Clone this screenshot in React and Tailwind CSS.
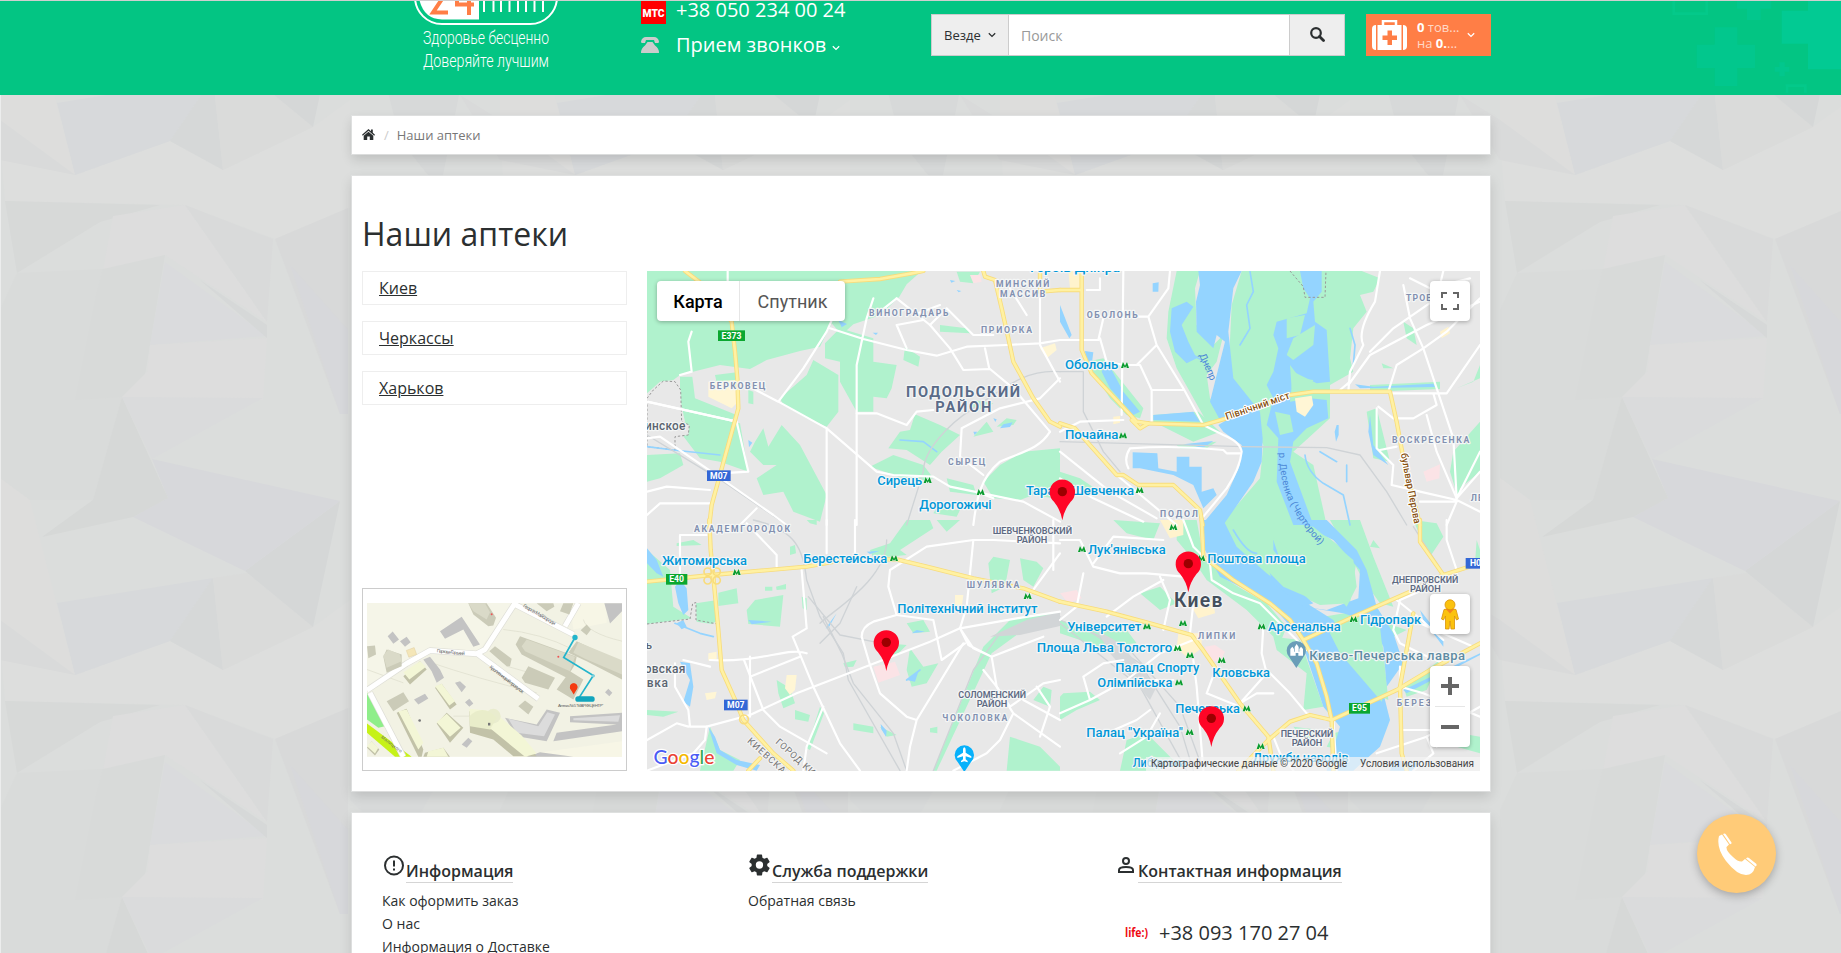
import React from "react";

/* ---------- page backdrop ---------- */
const FACETS = [
  ["#d9dbda", "17,273 103,269 143,358 145,375 122,397 93,500 30,500 0,478 0,310"],
  ["#dddedd", "0,640 75,675 170,641 223,670 313,627 350,600 350,708 275,739 185,705 5,701"],
  ["#d7d9db", "57,603 213,578 170,641 75,675"],
  ["#d6d8d8", "213,578 223,670 170,641"],
  ["#dadbda", "213,578 247,573 313,627 223,670"],
  ["#d5d7d7", "340,501 313,627 245,571"],
  ["#d7d8db", "152,459 340,501 245,571 133,517 168,498"],
  ["#d6d8d7", "122,397 168,498 133,517 42,537 93,500"],
  ["#dddddc", "0,478 30,500 75,675 0,620"],
  ["#d9dada", "-40,595 0,620 75,675 0,660"],
  ["#d7d9d8", "5,201 160,205 100,222 17,273"],
  ["#dddddd", "113,216 185,205 267,322 165,255 103,270"],
  ["#d9dada", "185,205 273,239 267,322"],
  ["#d8dad9", "103,269 165,255 145,375 122,397 75,400 95,300"],
  ["#dadbdd", "165,262 267,336 150,345"],
  ["#d6d8d8", "200,280 267,325 267,338"],
  ["#dddddd", "122,397 147,372 150,345 267,338 263,400"],
  ["#d8d9d9", "275,239 348,208 348,414 340,414"],
  ["#d7d8db", "290,265 348,330 348,414 340,414"],
  ["#dadbdc", "122,397 263,398 152,459"],
  ["#d9dbdb", "360,210 450,260 400,350 350,300"],
  ["#d7d9d9", "380,560 470,540 440,690 400,640"],
  ["#dcdddd", "400,400 490,470 470,540 360,500"],
];

function Backdrop() {
  const tiles = [];
  for (let i = -1; i < 4; i++) for (let j = -1; j < 2; j++) tiles.push([i * 500, j * 500]);
  return (
    <svg className="absolute inset-0 h-full w-full" viewBox="0 0 1841 953" preserveAspectRatio="none">
      <defs>
        <g id="facets">
          {FACETS.map(([c, p], i) => (
            <polygon key={i} points={p} fill={c} />
          ))}
        </g>
      </defs>
      <rect width="1841" height="953" fill="#dbdddc" />
      {tiles.map(([x, y], i) => (
        <use key={i} href="#facets" x={x} y={y} />
      ))}
      <rect width="1" height="953" fill="#eceded" />
    </svg>
  );
}

/* ---------- header ---------- */
function Logo() {
  return (
    <svg className="block h-[75px] w-[144px] shrink-0" viewBox="414 0 144 75">
      <rect x="415" y="-30" width="142" height="54" rx="27" fill="none" stroke="#fff" strokeWidth="2" />
      <path d="M479 -20H440Q420 -20 419 -2Q423 19 442 19.500H479Z" fill="#fff" />
      <path d="M444 -4L433 12.500H448" fill="none" stroke="#ff7e46" strokeWidth="4" />
      <path d="M457 -4V4.500H474M469 -4V15" fill="none" stroke="#ff7e46" strokeWidth="4" />
      <path d="M484 -2V12M493.500 -2V12M501 -2V12M509.500 -2V12M518 -2V12M526 -2V12M534.500 -2V12M543 -2V12" stroke="#fff" strokeWidth="2" />
      <g fill="#fff" fontFamily="Roboto, sans-serif" fontWeight="300" fontSize="17.500">
        <text x="423" y="44" textLength="126" lengthAdjust="spacingAndGlyphs">Здоровье бесценно</text>
        <text x="423" y="67" textLength="126" lengthAdjust="spacingAndGlyphs">Доверяйте лучшим</text>
      </g>
    </svg>
  );
}

function Chevron({ className }) {
  return (
    <svg className={className} viewBox="0 0 8 6" fill="none" stroke="currentColor" strokeWidth="1.300">
      <path d="M0.800 1.200L4 4.400L7.200 1.200" />
    </svg>
  );
}

function Crosses() {
  return (
    <svg className="absolute right-0 top-0 h-[94px] w-[361px]" viewBox="0 3 1083 282">
      <g fill="#02c78d">
        <path d="M704 82h68v52h53v70h-53v54h-68v-54h-54v-70h54z" />
        <path d="M770 3h104v23h-32v34h-41V26h-31z" />
        <path d="M905 32h79V3h99v205h-99v-77h-79z" fill="#02ca93" />
        <path d="M898 187h16v14h14v14h-14v14h-16v-14h-14v-14h14z" />
      </g>
      <path d="M581 3v38h99V3" fill="none" stroke="#04c98a" strokeWidth="8" />
      <path d="M921 278v-21h55v21" fill="none" stroke="#04c98a" strokeWidth="8" />
    </svg>
  );
}

function Header() {
  return (
    <header className="relative h-[95px] overflow-hidden border-t border-[#cfcfcf] bg-[#03c583]">
      <Crosses />
      <div className="-mt-px flex h-[95px] w-[1491px] items-start pl-[414px]">
        <Logo />
        <div className="ml-[83px] w-[290px] text-[20px] leading-5 text-white">
          <div className="flex h-[35px] items-start pt-px">
            <div className="flex h-[23px] w-[25px] items-center justify-center bg-[#f00]">
              <svg className="h-2 w-[23px]" viewBox="0 0 23 8">
                <text x="0.500" y="7.500" textLength="22" lengthAdjust="spacingAndGlyphs" fontFamily="Roboto, sans-serif" fontWeight="900" fontSize="10" fill="#fff">МТС</text>
              </svg>
            </div>
            <span className="-mt-px ml-2.5">+38 050 234 00 24</span>
          </div>
          <div className="flex items-start">
            <svg className="mt-0.5 h-4 w-[18px]" viewBox="0 0 18 16" fill="#ccc">
              <path d="M0 4.500Q1 0 5 0H13Q17 0 18 4.500L17.500 6H14L13 3H5L4 6H.5Z" />
              <path d="M6.500 5H11.500L14 8.500Q18 11 18 16H0Q0 11 4 8.500Z" />
            </svg>
            <span className="ml-[17px]">Прием звонков</span>
            <Chevron className="ml-1.5 mt-[10px] h-1.5 w-2" />
          </div>
        </div>
        <div className="mt-3.5 flex h-[42px] w-[414px] border border-[#ccc] text-[14px] leading-5">
          <div className="flex w-[77px] items-center border-r border-[#ccc] bg-[#eee] pl-3 text-[13px] text-[#2b2f30]">
            Везде
            <Chevron className="ml-[7px] h-1.5 w-2" />
          </div>
          <div className="flex flex-1 items-center bg-white pl-3 pt-px text-[#999]">Поиск</div>
          <div className="flex w-[55px] items-center justify-center border-l border-[#ccc] bg-[#eee]">
            <svg className="-mt-0.5 h-[15px] w-[15px]" viewBox="0 0 15 15" fill="none" stroke="#2b2f30">
              <circle cx="6" cy="6" r="4.800" strokeWidth="2.200" />
              <path d="M9.500 9.500L13.500 13.500" strokeWidth="2.800" strokeLinecap="round" />
            </svg>
          </div>
        </div>
        <div className="ml-[21px] mt-3.5 flex h-[42px] w-[125px] items-center bg-[#ff7e46] pl-1.5 text-[13px] leading-4 text-[#ffd9c8]">
          <svg className="h-[30px] w-[35px] shrink-0" viewBox="0 0 35 30">
            <path d="M11 5V1H24V5" fill="none" stroke="#fff" strokeWidth="2.500" />
            <path d="M4 5V30Q0 30 0 26V9Q0 5 4 5ZM31 5V30Q35 30 35 26V9Q35 5 31 5Z" fill="#fff" />
            <rect x="5.500" y="5" width="24" height="25" fill="#fff" />
            <path d="M15.500 10.500h4.500v5h5v4.500h-5v5h-4.500v-5h-5v-4.500h5z" fill="#ff7e46" />
          </svg>
          <div className="ml-2.5 w-[42px] whitespace-nowrap">
            <div><b className="text-white">0</b> тов...</div>
            <div>на <b className="text-white">0.</b>...</div>
          </div>
          <Chevron className="ml-2 h-1.5 w-2 text-white" />
        </div>
      </div>
    </header>
  );
}

/* ---------- city map ---------- */
/* Each quarter is drawn at three units per pixel from its own origin. */
const QUARTERS = {
  a: "translate(640 265) scale(.33333)",
  b: "translate(1060 265) scale(.33333)",
  c: "translate(640 520) scale(.33333)",
  d: "translate(1060 520) scale(.33333)",
};

const LAND = {
  a: [
    "M21 18H845L800 58L778 95L722 150L640 178L605 210L575 175L540 245L480 258L380 285L330 312L240 300L120 330L100 345L60 350L21 385Z",
    "M120 335H157L165 400L290 450L270 470L300 475L325 620L240 590L180 580L150 540L120 500L135 470L120 400Z",
    "M520 285L595 330V440L560 485L500 460L430 420L420 400L500 330Z",
    "M555 235L600 190L700 220V290L770 300L755 370L740 400L700 395V440L650 440L600 350V290L555 280Z",
    "M795 245L840 275L835 305L790 285Z",
    "M425 480L480 540L560 690L540 770L460 740L430 680L370 690L350 640L410 600L370 600L330 560L345 530L370 490L385 545Z",
    "M825 448L900 480L960 510L905 560L870 600L800 555L745 550L780 500L810 495Z",
    "M690 605L760 570L850 600L880 640L820 650Z",
    "M1260 550L1150 560L1080 600L1030 650L1060 700L1140 705L1180 690L1240 700L1260 690Z",
    "M21 570L120 565L130 600L60 640L21 650Z",
    "M950 20H1020L1000 55L960 50Z M900 180L980 190L990 205L900 200Z M1000 405L1060 415L1030 435L990 425Z",
    "M920 640L1000 660L1010 690L930 680Z M890 730L960 735L950 755L880 745Z",
    "M325 375L340 380V418L325 415Z M225 330L290 322V350L230 352Z",
    "M1100 460L1130 465L1120 480L1070 485Z M1040 470L1060 500L1000 515Z",
  ],
  b: [
    "M350 18H420L405 70L410 180L460 240L490 210L470 290L440 330L450 400L500 460L440 470L350 310L320 220L325 140Z",
    "M545 18H905L960 40L940 80L900 90L920 140L880 190L870 280L880 320L810 360V460L700 560L760 600L800 780H480L600 640L610 540L560 440L505 330L515 120Z",
    "M80 290L130 280L250 430L240 460L200 450L150 400Z M280 450L415 440L480 500L400 530L280 470Z",
    "M1180 560L1260 470V620L1200 670L1195 700L1170 620Z",
    "M930 360L1140 350V372L930 380Z M1030 170L1060 190L1070 240L1040 220Z M920 440L950 430L990 590L940 580Z",
    "M0 620L60 640L120 680L60 690L0 660Z M350 540L470 530L440 550L360 550Z",
    "M1190 370L1260 340V300L1240 350Z M965 295L1000 310L970 310Z",
  ],
  c: [
    "M21 90L90 150L100 260L155 295L21 312Z M168 250L232 240L235 300L215 312L170 305Z",
    "M235 218L290 205L295 250L235 258Z M320 270L345 240L430 225L420 320L325 312Z M375 200h22v12h-22z M408 200l30-8v16l-28 2z",
    "M690 90L750 70L800 0H870L880 25L780 90L800 105L700 115Z",
    "M1060 110L1110 120L1095 200L1055 220L1045 130Z M1140 115L1190 125L1210 145L1180 200L1150 180Z",
    "M450 80L465 75L468 100L450 105Z M485 230L500 235V270L488 265Z M610 430L650 420L640 440L615 442Z",
    "M810 385L850 440L895 430L860 490L815 500L800 450Z M740 370L800 375L770 405L740 400Z",
    "M410 480L450 505L465 550L430 565L415 520Z M465 570L510 585L505 605L465 598Z M540 560L552 580L510 690L500 685Z",
    "M1030 380L1110 300L1260 275V285L1150 330L1055 400L890 752H880Z M1110 650L1200 680L1260 740V752H1100Z",
    "M1210 500L1235 510L1230 560L1180 540Z M640 610L700 620L700 640L640 630Z M720 620L770 645L740 650Z M870 625l22-5v20l-22-3z",
    "M21 570L115 575L70 590L21 585Z M800 310L850 300L870 335L820 340Z M500 0H530V15L510 10Z M890 0L960 0L920 35Z",
    "M210 620L240 690L300 720L280 752H180Z M110 70L160 60L185 75L110 78Z",
  ],
  d: [
    "M350 0H410L430 110L500 180L620 250L680 320L660 370L560 270L480 210L440 180L400 120L350 60Z",
    "M475 0H740L890 120L870 250L780 255L640 190L520 80Z",
    "M790 290L910 270L960 300L985 540L900 500L800 380Z",
    "M640 350L720 360L790 560L730 570L740 460L650 390Z",
    "M810 0H900L940 110L1000 260L960 250L910 180Z",
    "M1060 0L1130 10L1150 50L1110 110L1085 60Z M1250 60L1260 90V120L1245 130Z",
    "M160 0L300 10L280 60L200 40Z M10 520L90 515L120 540L50 570L0 600V530Z",
    "M200 660L260 640L340 720L300 752H180Z M820 640L900 620L850 690L800 680Z",
    "M0 300L90 330L200 330L230 370L120 380L0 340Z M980 310L1040 330L1000 350Z M700 620L780 630L740 670Z",
    "M1030 500L1140 420L1100 510L1040 530Z M940 60L960 85L930 80Z",
    "M240 220L300 200L350 250L300 270Z M1200 640L1260 650V700L1190 680Z",
  ],
};

const WATER = {
  a: [
    "M1090 478l28-6-8 14-30 4z M1000 500l12 0-8 10z M1060 460l10 3-4 8z",
    "M325 525l12 8-10 14z M595 165l26 12-16 10z M930 45l16 3-12 5z M950 75l14 3-8 4z M698 203l16 0-6 7z",
  ],
  b: [
    "M415 18H545L520 70L505 200L520 340L600 440L608 520L605 590L580 650L490 780H425L500 690L540 600L545 540L490 500L475 480L500 465L545 440L480 465L450 410L480 290L495 230L470 210L460 250L410 200L408 110L420 60Z",
    "M335 130L380 110L400 125L365 180L385 230L405 270L450 300L410 280L380 295L345 260L330 200Z",
    "M720 18H785V80L760 110L765 170L800 195L810 350L770 355L700 320L690 410L750 400L800 405L805 460L740 490L700 530L690 590L760 780H700L650 650L655 520L620 480L640 400L620 360L640 320L655 250L640 210L650 170L740 145L750 100L730 70Z",
    "M218 562L292 565L295 610L350 620V575H388V605H425V680L460 670L470 690L430 730L400 660L340 630L240 610L218 610Z",
    "M130 310L150 305L190 380L240 440L220 450L150 370L125 320Z M280 450L400 440L420 470L280 465Z M75 258L100 262L95 300L78 280Z",
    "M0 120L35 210L28 220L0 170Z M930 450L940 540L985 600L940 570L925 500Z M885 358L940 365L1120 356L1125 366L900 370Z",
    "M370 538L460 528L430 548Z M278 55L296 52L295 80L278 80Z M830 480h6v30l-8 20-4-30z",
  ],
  c: [
    "M21 85L50 120L70 170L50 160L21 130Z M105 200L120 180L140 205L145 270L130 285L115 250Z",
    "M110 310l20-10 10 20-15 8z M120 425L150 430L160 500L150 560L130 545L150 480Z",
    "M205 620L225 650L240 690L290 720L360 735L350 752L290 735L230 700Z M590 280l-25 45-8 0z M722 612l18 20-2 18-14-22z",
    "M800 480l35-25-10 30z M325 300l70 5-60 8z M680 95l40-3-30 10z M830 330l25 5-40 5z",
  ],
  d: [
    "M430 0H490L530 80L620 160L740 250L820 300L860 380L960 480L990 600L960 680L880 752H800L840 620L790 560L720 350L620 240L480 170L435 90Z",
    "M590 50L640 60L680 180L760 250L730 260L640 190Z M700 0H800L890 90L920 150L950 260L1000 340L1030 430L980 500L970 380L940 310L850 280L730 260L800 270L895 235L900 150L820 60Z",
    "M1000 720L1080 730L1060 752H990Z M1080 270L1150 360L1150 380L1090 300Z M1030 510L1260 400V405L1040 520Z",
  ],
};

const ISLES = {
  b: ["M680 270L700 220L765 180L760 240L700 285Z", "M690 300L720 340L760 345L740 380L695 370Z", "M645 440L690 450L700 500L660 510Z", "M680 160L735 150L720 210L680 220Z"],
  d: ["M800 320L905 275L960 320L980 500L965 545L840 400Z", "M540 60L590 120L670 200L740 230L700 170L640 90L640 50L780 170L860 260L890 200L880 120L760 20L500 0Z"],
};

const BUILT = [
  ["a", "M205 350L290 345V415L275 430L205 395Z", "#fff6d5"],
  ["b", "M705 400L755 392L760 420L735 455L710 440Z", "#fff6d5"],
  ["b", "M25 18H60V70H30Z M160 455l20-2v20l-20 5z M1140 200l25-15 5 20-25 15z", "#fff3cd"],
  ["b", "M1090 620L1140 598L1138 640L1100 650Z", "#fbe3e6"],
  ["a", "M990 30h30l5 20-25 5z", "#fbe3e6"],
  ["a", "M1200 250l45-15 5 20-30 25z", "#fff6d5"],
  ["c", "M700 440L765 425L780 465L715 488Z", "#fbe3e6"],
  ["c", "M440 465l30 0-5 45-15 15-15-20z M195 520l35-5-5 20-25 5z M205 400l25-5v22l-25 5z M945 225l25 0-5 40-20-10z", "#fff6d5"],
  ["d", "M355 340h70v45l-40 30-35-30z M380 235l80 5 5 40-50 15z M300 0h70v45l-40 10z", "#fff3cd"],
  ["d", "M435 380l30-5 30 20-15 30-40-5z M0 220l50-10 15 25-40 15z", "#fbe3e6"],
];

const RAIL = {
  a: ["M1260 320C1150 310 1080 380 1000 430S850 560 850 620L800 780", "M21 510L250 650L440 780"],
  b: ["M0 530L550 545L800 548L900 570L980 680L1040 780", "M0 320H70V440L130 560L180 620"],
  c: ["M340 0C470 30 490 90 500 180L540 290L610 400L625 480L780 752", "M740 60C740 180 580 270 540 310", "M550 290L605 400L640 490L760 640L800 752", "M540 370L600 310L650 200", "M1260 290L1080 340L1000 450L880 752", "M505 230L600 345L700 365"],
  d: ["M0 300L200 380L360 560L430 752", "M90 335L240 430L360 620L400 752", "M1060 20L1150 160", "M0 310L240 500L380 752"],
};

const STREETS = {
  a: [
    "M263 18V60M155 200L145 230L155 320L120 330M600 110L560 200L490 310L415 410M415 410L290 345M415 410L560 490L710 620L760 630L880 635L930 665L1150 710L1260 770",
    "M560 490V780M650 780V300L680 160L700 100M570 190L670 222L800 255L890 272L980 245L1100 240L1200 235L1260 225M770 100L870 180L930 250L970 315L1050 312L1120 370L1230 500",
    "M720 140L770 100M650 445H710L800 480M800 480L830 440L880 435M1035 250L1048 312M21 410L290 470L325 620L240 625M21 520L60 515L200 610L400 750L440 780M21 680L80 665L210 675",
    "M1230 500C1200 550 1150 560 1080 590C1020 640 1010 700 1000 780M1030 630L960 575L965 490L1080 430L1200 400L1260 340M21 750L60 715L210 715M350 730L300 780M800 250L770 180L850 165",
    "M820 150L900 120M870 180L920 130L1000 210H1060M1110 70L1160 150M1200 18V240L1260 350M1060 700L1010 680",
  ],
  b: [
    "M190 18L185 450M330 18L325 70L265 155H80M265 155L290 240L230 300M290 240L370 370L430 480L490 510Q540 530 545 560Q540 610 500 670L430 755M0 225H115L130 160M120 220L140 290L190 300L240 300L275 375H370M275 375V470",
    "M190 465L60 470L0 500M80 75H120V40M210 550Q190 580 205 610M210 550Q350 540 490 555L500 565H540M0 560L150 680L290 760M0 640L100 700L250 770M170 630L350 780",
    "M960 18L945 110Q890 200 910 240L870 320L865 380M865 360L930 270L1100 180L1260 110M1150 18L1130 100L1000 190L930 260M1030 60L1050 160L1090 250L1180 520L1190 700L1260 560M1050 40L1110 70L1230 40M1260 100L1160 200L1090 250L1010 300L985 380",
    "M990 385H1160L1260 240M955 425L1000 460H1060L1130 420L1120 385M950 430V550L1000 600L995 660L1080 680L1190 705L1260 740M960 555L1010 545M1080 710H1190L1160 780M1260 620L1190 700L1130 560L1100 450M840 375L870 350",
  ],
  c: [
    "M120 45H200M120 45V165M320 10L410 105V140M210 420C350 430 450 380 500 400M500 325L485 150M458 350L520 500L600 670L660 752M458 350L500 325M312 420L370 570L420 620L560 700",
    "M210 440L130 420M330 470L480 410M200 620L330 585L470 520L690 435L870 365L960 325L1130 295L1260 275M690 435L665 350Q665 320 700 305L770 285L745 200L750 150L860 80L1000 60L1060 60L1260 70",
    "M1000 60L980 260L960 325L985 375L1055 410L1070 500L1120 580L1260 680M960 325L1000 385L1055 410L1210 350M690 435L720 520L800 590L830 600L970 370M830 600L810 680L800 752",
    "M770 285L880 300L905 420L975 370M1120 580L1080 660L1040 700L940 752M1030 450L1070 500L1110 560L1210 490L1260 480M1150 540L1260 600M1190 500L1230 560L1200 650M1165 230L1260 100",
    "M105 430V500L145 570L150 620L200 620L195 660L160 700L21 752M21 660L110 610L145 620M330 410V590M150 620H200M550 560L500 680L490 752M560 0V100M645 0V100M1240 0V150",
  ],
  d: [
    "M0 60H60L100 140L180 160H260L370 170M100 130L160 50L310 60M300 170L330 240L310 330M70 160L50 260L0 300M140 290L220 230L310 180M370 0L400 80L450 130L455 180L520 220L600 250L680 330L740 390",
    "M610 320L605 400L620 460L540 550M620 450L690 520L740 580L800 600M90 540L70 470L130 430L190 420M0 580L90 540L200 480L340 480M540 550L590 520H640M470 440L440 520L540 560",
    "M1160 0V60L1190 150M1190 160L1110 200L1020 240L1000 330L1020 370L1080 400L1150 430M1080 310L1240 380M1010 240L1085 300L1150 360M1020 440V630M1020 500L1090 520L1260 590M950 700L1100 650L1260 560M1020 630H1110L1130 680",
    "M640 650L660 700L700 752M820 600L830 752M300 580L260 650L180 700M400 250L390 340M400 360L300 400L200 480M270 570L230 600L140 640M400 420L410 500L430 752M1100 650L1120 700L1060 752",
  ],
};

const AVENUES = {
  a: ["M135 18L190 60L275 170L285 260L292 340L295 430L248 600L215 720L208 780", "M600 50L720 42L815 25L850 18", "M1030 18L1035 35L1065 45L1085 130L1105 220L1120 290L1180 400L1230 470L1260 485", "M1200 18V80L1260 75"],
  b: ["M65 18V255L95 325L230 470L265 475L430 480L500 460L690 390L760 380H990L1010 470L1030 580L1080 780", "M0 75H65", "M0 475L45 490L170 630L190 630L235 660H340L420 735L428 780", "M215 465L240 490L265 475"],
  c: ["M208 0L212 90L220 170L235 330L245 450L290 550L310 600L400 700L460 752", "M21 185L215 165L500 140L620 118L770 118L860 140L1000 175L1150 205L1260 245", "M360 715L325 752"],
  d: ["M0 245L140 275L270 310L395 345L425 385L540 550L625 650L640 752", "M425 0L430 110L520 180L630 250L690 300L730 360L770 430L800 530L815 600L820 752", "M535 752L625 660L690 605L750 585L815 600L880 570L1010 510L1110 450L1260 370", "M730 360L880 290L1050 215L1150 165L1260 130", "M1080 0V65L1150 165", "M1060 280L1020 500L1025 700L1040 752"],
};

/* quarter, x, baseline, size, width, kind, text */
const LABELS = [
  ["a", 1068, 66, 26, 160, "s", "МИНСКИЙ"],
  ["a", 1080, 96, 26, 136, "s", "МАССИВ"],
  ["a", 687, 153, 26, 238, "s", "ВИНОГРАДАРЬ"],
  ["a", 1023, 204, 26, 153, "s", "ПРИОРКА"],
  ["a", 209, 372, 26, 167, "s", "БЕРКОВЕЦ"],
  ["a", 798, 397, 44, 342, "t", "ПОДОЛЬСКИЙ"],
  ["a", 886, 442, 44, 168, "t", "РАЙОН"],
  ["a", 15, 494, 36, 121, "p", "инское"],
  ["a", 924, 600, 26, 112, "s", "СЫРЕЦ"],
  ["a", 712, 659, 39, 134, "m", "Сирець"],
  ["a", 838, 731, 39, 217, "m", "Дорогожичі"],
  ["a", 1158, 690, 39, 324, "m", "Тараса Шевченка"],
  ["a", 1170, 20, 39, 270, "m", "Героїв Дніпра"],
  ["b", 80, 158, 26, 153, "s", "ОБОЛОНЬ"],
  ["b", 1038, 108, 26, 170, "s", "ТРОЕЩИНА"],
  ["b", 15, 313, 39, 160, "m", "Оболонь"],
  ["b", 15, 523, 39, 160, "m", "Почайна"],
  ["b", 996, 533, 26, 232, "s", "ВОСКРЕСЕНКА"],
  ["b", 300, 755, 26, 114, "s", "ПОДОЛ"],
  ["b", 1232, 708, 26, 80, "s", "ЛЕСН"],
  ["c", 162, 36, 26, 288, "s", "АКАДЕМГОРОДОК"],
  ["c", 66, 134, 39, 255, "m", "Житомирська"],
  ["c", 490, 128, 39, 252, "m", "Берестейська"],
  ["c", 1058, 42, 26, 238, "d", "ШЕВЧЕНКОВСКИЙ"],
  ["c", 1130, 70, 26, 92, "d", "РАЙОН"],
  ["c", 980, 204, 26, 158, "s", "ШУЛЯВКА"],
  ["c", 772, 279, 39, 420, "m", "Політехнічний інститут"],
  ["c", 10, 388, 34, 26, "p", "нь"],
  ["c", 14, 460, 36, 122, "p", "овская"],
  ["c", 20, 500, 36, 64, "p", "вка"],
  ["c", 955, 534, 26, 203, "d", "СОЛОМЕНСКИЙ"],
  ["c", 1010, 562, 26, 92, "d", "РАЙОН"],
  ["c", 907, 603, 26, 195, "s", "ЧОКОЛОВКА"],
  ["d", 84, 102, 39, 233, "m", "Лук'янівська"],
  ["d", 442, 128, 39, 295, "m", "Поштова площа"],
  ["d", 342, 262, 58, 145, "k", "Киев"],
  ["d", 996, 190, 26, 199, "d", "ДНЕПРОВСКИЙ"],
  ["d", 1050, 217, 26, 92, "d", "РАЙОН"],
  ["d", 22, 333, 39, 222, "m", "Університет"],
  ["d", 624, 333, 39, 218, "m", "Арсенальна"],
  ["d", 900, 311, 39, 183, "m", "Гідропарк"],
  ["d", 414, 357, 26, 112, "s", "ЛИПКИ"],
  ["d", -70, 397, 39, 407, "m", "Площа Льва Толстого"],
  ["d", 166, 455, 39, 252, "m", "Палац Спорту"],
  ["d", 112, 500, 39, 225, "m", "Олімпійська"],
  ["d", 457, 470, 39, 173, "m", "Кловська"],
  ["d", 748, 420, 39, 467, "l", "Києво-Печерська лавра"],
  ["d", 1010, 558, 26, 150, "s", "БЕРЕЗНЯ"],
  ["d", 346, 578, 39, 194, "m", "Печерська"],
  ["d", 79, 650, 39, 290, "m", "Палац \"Україна\""],
  ["d", 662, 651, 26, 158, "d", "ПЕЧЕРСКИЙ"],
  ["d", 695, 678, 26, 92, "d", "РАЙОН"],
  ["d", 578, 726, 39, 288, "m", "Дружби народів"],
  ["d", 218, 742, 39, 160, "m", "Либідська"],
];

const KINDS = {
  s: { fill: "#8290b0", fontWeight: 700 },
  t: { fill: "#5a6b88", fontWeight: 700 },
  d: { fill: "#5d6982", fontWeight: 600 },
  p: { fill: "#5b6470", fontWeight: 500 },
  m: { fill: "#0297d8", fontWeight: 500 },
  l: { fill: "#5f8ba3", fontWeight: 500 },
  k: { fill: "#444f5c", fontWeight: 600 },
};

const METRO = [
  ["a", 863, 645], ["a", 1022, 681], ["b", 195, 300], ["b", 189, 511], ["b", 239, 675],
  ["c", 290, 156], ["c", 762, 114], ["c", 1163, 228], ["d", 340, 21], ["d", 66, 87], ["d", 424, 114],
  ["d", 369, 309], ["d", 261, 319], ["d", 605, 319], ["d", 881, 297], ["d", 353, 384], ["d", 390, 405],
  ["d", 485, 420], ["d", 357, 487], ["d", 560, 565], ["d", 389, 636], ["d", 602, 678],
];

const SHIELDS = [
  ["a", 234, 196, 81, 32, "#0ba730", "E373"],
  ["a", 201, 616, 71, 32, "#3367d6", "М07"],
  ["c", 78, 162, 64, 32, "#0ba730", "E40"],
  ["c", 252, 539, 71, 32, "#3367d6", "М07"],
  ["d", 867, 549, 63, 32, "#0ba730", "E95"],
  ["d", 1217, 114, 74, 32, "#3367d6", "Н08"],
];

const PINS = [["b", 7, 680], ["d", 385, 131], ["c", 739, 367], ["d", 454, 595]];

const pick = (list, q) => list.filter((e) => e[0] === q);

function Paths({ data, ...rest }) {
  return (
    <g {...rest}>
      {Object.entries(data).map(([q, ds]) => (
        <g key={q} transform={QUARTERS[q]}>
          {ds.map((d, i) => (
            <path key={i} d={d} />
          ))}
        </g>
      ))}
    </g>
  );
}

function CityDrawing() {
  const quarters = Object.keys(QUARTERS);
  const line = { fill: "none", strokeLinejoin: "round", strokeLinecap: "round" };
  return (
    <svg className="block h-[500px] w-[833px]" viewBox="647 271 833 500" fontFamily="Roboto, sans-serif">
      <rect x="647" y="271" width="833" height="500" fill="#e8e8e8" />
      <Paths data={LAND} fill="#b0f2cd" />
      <Paths data={WATER} fill="#94d4ff" />
      <Paths data={ISLES} fill="#b0f2cd" />
      {BUILT.map(([q, d, c], i) => (
        <path key={i} transform={QUARTERS[q]} d={d} fill={c} />
      ))}
      <g transform={QUARTERS.a}>
        <path d="M21 400L40 375L70 348L105 350L122 375L125 470L148 480L145 510L105 515V555L21 545Z" fill="#e8e8e8" stroke="#999" strokeWidth="3" strokeDasharray="7 6" />
        <path d="M21 410L290 470" stroke="#fff" strokeWidth="7" />
      </g>
      <path transform={QUARTERS.c} d="M21 312L150 297L158 250L168 248V300L232 312" fill="none" stroke="#999" strokeWidth="3" strokeDasharray="7 6" />
      <path transform={QUARTERS.b} d="M690 18L730 65L735 97H795L798 18" fill="none" stroke="#999" strokeWidth="3" strokeDasharray="7 6" />
      <Paths data={{ b: ["M570 20L580 80L560 120L570 190L540 240", "M735 570Q740 620 790 655L850 690L870 780M780 560L830 590M860 600V650", "M870 190L885 240L880 300"], c: ["M105 310L180 340L220 350M800 480L840 450"], d: ["M280 460L160 400M520 30Q560 100 590 100"], a: ["M780 525L850 530L890 560M21 545L100 555L240 570"] }} stroke="#94d4ff" strokeWidth="5" {...line} />
      <Paths data={RAIL} stroke="#cfd3d6" strokeWidth="4" {...line} />
      <path transform={QUARTERS.c} d="M1050 350L1160 300L1260 275V318L1140 345Z" fill="#d2d5d7" />
      <path transform={QUARTERS.d} d="M110 330L180 370L290 500L270 540L150 400Z" fill="#d5d8da" />
      <Paths data={STREETS} stroke="#fff" strokeWidth="6.500" {...line} />
      <Paths data={AVENUES} stroke="#f8dc7c" strokeWidth="13" {...line} />
      <Paths data={AVENUES} stroke="#fff1a2" strokeWidth="8" {...line} />
      <g transform={QUARTERS.c} fill="none" stroke="#f8dc7c" strokeWidth="5">
        <circle cx="203" cy="155" r="11" /><circle cx="230" cy="155" r="11" />
        <circle cx="203" cy="181" r="11" /><circle cx="230" cy="181" r="11" />
        <circle cx="312" cy="598" r="13" />
      </g>
      {quarters.map((q) => (
        <g key={q} transform={QUARTERS[q]}>
          {pick(LABELS, q).map(([, x, y, size, w, kind, text], i) => (
            <text key={i} x={x} y={y} fontSize={size} textLength={w} lengthAdjust={kind === "m" || kind === "d" ? "spacingAndGlyphs" : "spacing"} stroke="#f4f6f6" strokeWidth="7" strokeLinejoin="round" paintOrder="stroke" {...KINDS[kind]}>
              {text}
            </text>
          ))}
          {pick(METRO, q).map(([, x, y], i) => (
            <path key={i} transform={`translate(${x} ${y})`} d="M-12 9L-6-9L0 2L6-9L12 9H5L4 3L0 9L-4 3L-5 9Z" fill="#0a9b2e" stroke="#eaf7ee" strokeWidth="3" paintOrder="stroke" />
          ))}
          {pick(SHIELDS, q).map(([, x, y, w, h, c, text], i) => (
            <g key={i}>
              <rect x={x} y={y} width={w} height={h} fill={c} />
              <text x={x + w / 2} y={y + 25} textAnchor="middle" fontSize="26" fontWeight="700" fill="#fff">{text}</text>
            </g>
          ))}
        </g>
      ))}
      <g transform={QUARTERS.b} fontSize="30" strokeLinejoin="round" paintOrder="stroke">
        <text transform="translate(500 465) rotate(-19)" textLength="202" fontWeight="500" fill="#86500f" stroke="#fff" strokeWidth="7">Північний міст</text>
        <text transform="translate(417 270) rotate(66)" textLength="86" fill="#4a86d6">Днепр</text>
        <text transform="translate(1022 566) rotate(79)" textLength="215" fontWeight="500" fill="#86500f" stroke="#fff" strokeWidth="7">бульвар Перова</text>
        <path id="desenka" d="M657 563Q660 660 690 715Q730 790 785 845" fill="none" />
        <text fill="#4a86d6" fontSize="29">
          <textPath href="#desenka" textLength="312">р. Десенка (Черторой)</textPath>
        </text>
      </g>
      <g transform={QUARTERS.c} fontSize="28" fill="#777" stroke="#f4f4f4" strokeWidth="6" paintOrder="stroke">
        <text transform="translate(320 665) rotate(42)" textLength="165">КИЕВСКАЯ</text>
        <text transform="translate(405 668) rotate(42)" textLength="185">ГОРОД КИЕВ</text>
      </g>
      <g transform={QUARTERS.c}>
        <path d="M973 756L953 726A29 29 0 1 1 993 726Z" fill="#07b1fb" />
        <path d="M973 682q4 0 4 8v8l17 11v5l-17-5v9l6 5v4l-10-3-10 3v-4l6-5v-9l-17 5v-5l17-11v-8q0-8 4-8z" fill="#fff" />
      </g>
      <g transform={QUARTERS.d}>
        <path d="M709 444L688 412A29 29 0 1 1 730 412Z" fill="#6a9db8" />
        <path d="M691 407V387l6-7 5 7v8h2V381l6-9 6 9v14h2v-8l5-7 6 7v20h-14v-8h-8v8z" fill="#fff" />
      </g>
      {PINS.map(([q, x, y], i) => (
        <g key={i} transform={QUARTERS[q]}>
          <g transform={`translate(${x} ${y})`}>
            <path d="M0 86Q-5 55-25 30A38 38 0 1 1 25 30Q5 55 0 86Z" fill="#ff0526" />
            <circle r="14" fill="#9c0000" />
          </g>
        </g>
      ))}
      <text x="653.500" y="763.500" fontSize="19.500" fontWeight="500" fontFamily="Lato, sans-serif" stroke="#fff" strokeWidth="2.500" paintOrder="stroke" textLength="61" lengthAdjust="spacingAndGlyphs">
        <tspan fill="#4a5bf5">G</tspan><tspan fill="#ea4335">o</tspan><tspan fill="#f5b800">o</tspan><tspan fill="#4a5bf5">g</tspan><tspan fill="#34a853">l</tspan><tspan fill="#ea4335">e</tspan>
      </text>
    </svg>
  );
}

function CityMap() {
  return (
    <div className="relative h-[500px] w-[833px] overflow-hidden font-[Roboto,sans-serif]">
      <CityDrawing />
      <div className="absolute left-2.5 top-2.5 flex h-10 items-center rounded-sm bg-white text-[18px] shadow-[0_1px_4px_rgba(0,0,0,0.3)]">
        <div className="flex h-10 w-[83px] items-center justify-center border-r border-[#e6e6e6] font-medium text-black">Карта</div>
        <div className="flex w-[105px] items-center justify-center text-[#565656]">Спутник</div>
      </div>
      <div className="absolute right-2.5 top-2.5 flex h-10 w-10 items-center justify-center rounded-sm bg-white shadow-[0_1px_4px_rgba(0,0,0,0.3)]">
        <svg className="h-[18px] w-[18px]" viewBox="0 0 18 18" fill="none" stroke="#666" strokeWidth="2">
          <path d="M1 6V1H6M12 1H17V6M17 12V17H12M6 17H1V12" />
        </svg>
      </div>
      <div className="absolute right-2.5 top-[323px] flex h-10 w-10 items-center justify-center rounded-sm bg-white shadow-[0_1px_4px_rgba(0,0,0,0.3)]">
        <svg className="h-[31px] w-[18px]" viewBox="0 0 18 31">
          <path d="M3 10.500Q9 8.500 15 10.500L17.500 20L15.500 21L13.500 17V30H10L9 22L8 30H4.500V17L2.500 21L.5 20Z" fill="#fbc20e" stroke="#d9920a" strokeWidth=".8" />
          <path d="M4.500 9.800H13.500L9 14.500Z" fill="#f5831f" />
          <circle cx="9" cy="5.800" r="5" fill="#fbc20e" stroke="#d9920a" strokeWidth=".8" />
        </svg>
      </div>
      <div className="absolute right-2.5 top-[395px] flex h-[81px] w-10 flex-col items-center rounded-sm bg-white shadow-[0_1px_4px_rgba(0,0,0,0.3)]">
        <svg className="h-[81px] w-10" viewBox="0 0 40 81">
          <path d="M18 11h4v7h7v4h-7v7h-4v-7h-7v-4h7zM11 59h18v4H11z" fill="#666" />
          <path d="M5 40.500H35" stroke="#e6e6e6" />
        </svg>
      </div>
      <div className="absolute bottom-0 right-0 flex h-3.5 items-center text-[10px] leading-[14px] text-[#444]">
        <svg className="h-3.5 w-[334px] bg-[#f5f5f5]/70" viewBox="1146 757 334 14" fontSize="10" fill="#444">
          <text x="1151" y="767" textLength="196" lengthAdjust="spacingAndGlyphs">Картографические данные © 2020 Google</text>
          <text x="1360" y="767" textLength="114" lengthAdjust="spacingAndGlyphs">Условия использования</text>
        </svg>
      </div>
    </div>
  );
}

/* ---------- route thumbnail ---------- */
function RouteThumb() {
  return (
    <svg className="block h-[154px] w-[255px]" viewBox="81 101 765 461">
      <rect x="81" y="101" width="765" height="461" fill="#f2f2e4" />
      <path d="M81 101H520L415 245L270 235L81 350Z" fill="#f5f5e8" />
      <path d="M500 562L846 515V562ZM690 101H800V160L700 180Z" fill="#f7f6e6" />
      <path d="M81 370L135 470L115 475L81 450Z" fill="#8fee8a" />
      <path d="M81 462L215 562H165L81 490Z" fill="#c6f218" />
      <g fill="none" stroke="#dcdccc" strokeWidth="2">
        <path d="M490 180Q600 190 700 240M260 275Q420 330 590 370M500 290L640 330M730 150Q740 190 846 215M340 440H390M81 300L190 340" />
      </g>
      <g fill="none" stroke="#dfdfd8" strokeWidth="19" strokeLinejoin="round">
        <path d="M81 362L200 282L270 243L410 253L435 240L525 101M415 255L595 388M525 105L700 195M715 101L675 170M90 370L190 562" />
      </g>
      <g fill="none" stroke="#fff" strokeWidth="15" strokeLinejoin="round">
        <path d="M81 362L200 282L270 243L410 253L435 240L525 101M415 255L595 388M525 105L700 195M715 101L675 170M90 370L190 562" />
      </g>
      <g fill="#cbcbb8">
        <path d="M385 101H440L468 145L460 168L445 170L400 135ZM81 230L105 228L108 255L85 266ZM130 262L140 240L185 255V290L140 310ZM140 395L190 368L207 395L160 425ZM448 245L465 230L515 268L510 290L500 290Z" />
        <path d="M527 225L540 200L710 262L705 285L680 325L545 255ZM685 250L710 215L846 280V330L740 275ZM545 325L565 290L645 325L625 360L555 340ZM650 360L690 305L730 330L700 390ZM535 410L555 393L580 412L565 435ZM660 125L670 101H700L688 135ZM722 182L740 165L753 180L740 197ZM590 101L620 125L643 112L640 101Z" />
      </g>
      <g fill="#dadac8">
        <path d="M385 101H435L450 128L440 150L400 125ZM130 258L145 240L180 255L185 275L140 295ZM545 230L560 210L705 262L690 305L555 245ZM700 250L715 218L846 272V315L735 268Z" />
      </g>
      <g fill="#c3c3c3">
        <path d="M300 185L365 142L420 225L400 232L370 180L315 208ZM143 200L158 186L177 210L160 223ZM180 215L200 202L212 218L195 232ZM222 390L255 373L265 387L235 405ZM250 270L270 262L300 300L312 325L290 340L275 305ZM345 340L360 335L378 352L365 368ZM375 398L388 388L400 402L388 412ZM793 101H846V125L810 162Z" />
        <path d="M495 445L590 465L620 420L660 430L620 515L530 500ZM690 440L846 430V485L640 515L650 490L830 465L690 458ZM795 368L805 358L817 370L808 380ZM365 525L385 505L397 515L380 535ZM560 562L600 548L700 562Z" />
      </g>
      <path d="M505 448L595 470L622 428L645 435L612 500L530 490ZM700 446L840 437L835 457L700 452Z" fill="#dcdcdc" />
      <g fill="#c2c2a8">
        <path d="M170 430L200 418L250 540L245 562H235ZM285 355L305 343L350 405L330 420ZM290 462L320 430L370 475L330 520ZM388 425L460 435L545 505L590 560H520L460 510L390 490ZM190 320L240 275L260 300L210 345ZM81 535L95 515L118 540L105 558ZM255 550L310 535L330 562H250Z" />
      </g>
      <g fill="#f3f6d6">
        <path d="M175 425L200 420L250 520L235 540ZM285 350L305 343L345 395L328 408ZM290 458L320 433L362 475L330 502ZM388 418L460 425L545 498L590 552L555 562L455 480L390 465ZM190 308L240 275L258 292L208 330ZM81 530L95 515L115 535L105 552ZM265 545L310 535L325 562H260Z" />
      </g>
      <circle cx="460" cy="440" r="22" fill="#e9ecce" />
      <path d="M388 440Q430 400 470 445L450 480L390 470Z" fill="#e9edca" />
      <rect x="202" y="238" width="25" height="22" fill="#f4e6b8" stroke="#d8c490" transform="rotate(-20 214 249)" />
      <path d="M705 204L671 264L760 318L715 388" fill="none" stroke="#22b4cc" strokeWidth="5" />
      <circle cx="705" cy="204" r="8" fill="#22b4cc" />
      <circle cx="760" cy="319" r="5" fill="#7cd0dc" />
      <rect x="706" y="380" width="58" height="17" rx="8" fill="#12a5bd" />
      <path d="M701 375L692 360A11 11 0 1 1 710 360Z" fill="#f43a10" />
      <circle cx="701" cy="352" r="11" fill="#f43a10" />
      <g fontFamily="Liberation Sans, sans-serif" fill="#666">
        <text x="654" y="412" fontSize="13" textLength="136">Аптека №5 "МАРКЕЦЕНТР"</text>
        <text transform="translate(548 112) rotate(30)" fontSize="15" textLength="110">Георгія Майбороди</text>
        <text transform="translate(290 248) rotate(6)" fontSize="14" textLength="84">Паркова-Горський</text>
        <text transform="translate(448 295) rotate(38)" fontSize="15" textLength="125">Кропивницкий провулок</text>
        <text transform="translate(122 505) rotate(37)" fontSize="14" textLength="75">Малицкого</text>
      </g>
      <g fill="#e55"><circle cx="455" cy="134" r="3" /><circle cx="655" cy="262" r="3" /></g>
      <g fill="#777"><circle cx="239" cy="453" r="4" /><rect x="444" y="460" width="7" height="8" /></g>
    </svg>
  );
}

/* ---------- footer ---------- */
function FootHeading({ icon, children }) {
  return (
    <div className="flex h-[34px] items-start">
      {icon}
      <span className="mt-[3px] h-[25px] border-b border-[#d5d5d5] pt-0.5 text-[16px] font-semibold leading-[22px] text-[#2b2f30]">{children}</span>
    </div>
  );
}

const CARD = "bg-white shadow-[0_0_0_1px_rgba(225,226,226,0.8),0_5px_12px_rgba(0,0,0,0.14)]";

export default function App() {
  return (
    <div className="relative h-[953px] w-[1841px] overflow-hidden font-['Open_Sans',sans-serif] text-[#2b2f30]">
      <Backdrop />
      <div className="relative">
        <Header />
        <main className="ml-[352px] w-[1138px]">
          <nav className={`mt-[21px] flex h-[38px] items-center pl-2.5 text-[13px] ${CARD}`}>
            <svg className="-mt-0.5 h-[11px] w-[13px]" viewBox="0 0 13 11" fill="#2b2f30">
              <path d="M6.500 0L9 2.200V.6H10.800V3.800L13 5.800L12.200 6.700L6.500 1.700L.8 6.700L0 5.800Z" />
              <path d="M6.500 2.700L11.300 6.800V11H7.800V7.500H5.200V11H1.700V6.800Z" />
            </svg>
            <span className="ml-[9px] pt-0.5 text-[#ccc]">/</span>
            <span className="ml-2 pt-0.5 text-[#777]">Наши аптеки</span>
          </nav>
          <section className={`mt-[22px] h-[615px] px-2.5 pt-[36px] ${CARD}`}>
            <h1 className="h-[59px] text-[32px] leading-[44px]">Наши аптеки</h1>
            <div className="flex justify-between">
              <div className="flex h-[500px] w-[265px] flex-col">
                {["Киев", "Черкассы", "Харьков"].map((c) => (
                  <div key={c} className="mb-4 flex h-[34px] items-center border border-[#eee] pl-4 text-[16px] leading-[22px]">
                    <a className="underline">{c}</a>
                  </div>
                ))}
                <div className="mt-auto flex h-[183px] items-center justify-center border border-[#ccc]">
                  <RouteThumb />
                </div>
              </div>
              <CityMap />
            </div>
          </section>
          <footer className={`mt-[22px] flex h-[300px] pl-[30px] pt-[42px] text-[14px] leading-[23px] ${CARD}`}>
            <div className="w-[366px]">
              <FootHeading
                icon={
                  <svg className="ml-0.5 h-[21px] w-[22px]" viewBox="0 0 22 21" fill="none" stroke="#2b2f30" strokeWidth="2">
                    <circle cx="10" cy="10.500" r="9" />
                    <path d="M10 5.500V11.500M10 13.500V15.500" />
                  </svg>
                }
              >
                Информация
              </FootHeading>
              <p>Как оформить заказ</p>
              <p>О нас</p>
              <p>Информация о Доставке</p>
            </div>
            <div className="w-[370px]">
              <FootHeading
                icon={
                  <svg className="ml-px h-[23px] w-[23px] -mt-px" viewBox="2 1.500 22 22" fill="#2b2f30">
                    <path d="M19.430 12.980c.04-.32.07-.64.07-.98s-.03-.66-.07-.98l2.110-1.650c.19-.15.24-.42.12-.64l-2-3.460c-.12-.22-.39-.3-.61-.22l-2.490 1c-.52-.4-1.080-.73-1.690-.98l-.38-2.650C14.460 2.180 14.250 2 14 2h-4c-.25 0-.46.18-.49.42l-.38 2.650c-.61.25-1.170.59-1.690.98l-2.490-1c-.23-.09-.49 0-.61.22l-2 3.460c-.13.22-.07.49.12.64l2.110 1.650c-.04.32-.07.65-.07.98s.03.66.07.98l-2.110 1.650c-.19.15-.24.42-.12.64l2 3.460c.12.22.39.3.61.22l2.490-1c.52.4 1.080.73 1.690.98l.38 2.650c.03.24.24.42.49.42h4c.25 0 .46-.18.49-.42l.38-2.650c.61-.25 1.170-.59 1.690-.98l2.490 1c.23.09.49 0 .61-.22l2-3.460c.12-.22.07-.49-.12-.64zM12 15.500a3.500 3.500 0 1 1 0-7 3.500 3.500 0 0 1 0 7z" />
                  </svg>
                }
              >
                Служба поддержки
              </FootHeading>
              <p>Обратная связь</p>
            </div>
            <div>
              <FootHeading
                icon={
                  <svg className="mt-0.5 h-4 w-5" viewBox="0 0 20 16" fill="none" stroke="#2b2f30" strokeWidth="2">
                    <circle cx="8" cy="4" r="3" />
                    <path d="M1 15V13Q1 10 8 10T15 13V15Z" />
                  </svg>
                }
              >
                Контактная информация
              </FootHeading>
              <div className="mt-[30px] flex items-center text-[20px] leading-7">
                <svg className="ml-[7px] h-3 w-[34px] shrink-0" viewBox="0 0 34 12">
                  <text x="0" y="9.500" textLength="23" lengthAdjust="spacingAndGlyphs" fontFamily="Open Sans, sans-serif" fontWeight="700" fontSize="12" fill="#ee0a14">life:)</text>
                </svg>
                +38 093 170 27 04
              </div>
            </div>
          </footer>
        </main>
      </div>
      <button className="absolute left-[1697px] top-[814px] flex h-[79px] w-[79px] items-center justify-center rounded-full bg-[#ffcb78] shadow-[0_3px_8px_rgba(0,0,0,0.25)]">
        <svg className="h-[42px] w-[40px]" viewBox="0 0 40 42" fill="#fff">
          <path d="M2 3L5 1.500L12 11.500L9.500 14Q9 18 16 24Q21 29 25 28.500L28 26L38 34Q36 42 29 42Q20 42 9 28Q-1 15 2 3Z" />
          <path d="M6 1Q8 0 9 1.500L14.500 9.500Q15 11 13 11.200ZM29 25.500Q30.500 24 32 25L39.500 31Q40 33 38.500 33.500Z" />
        </svg>
      </button>
    </div>
  );
}
